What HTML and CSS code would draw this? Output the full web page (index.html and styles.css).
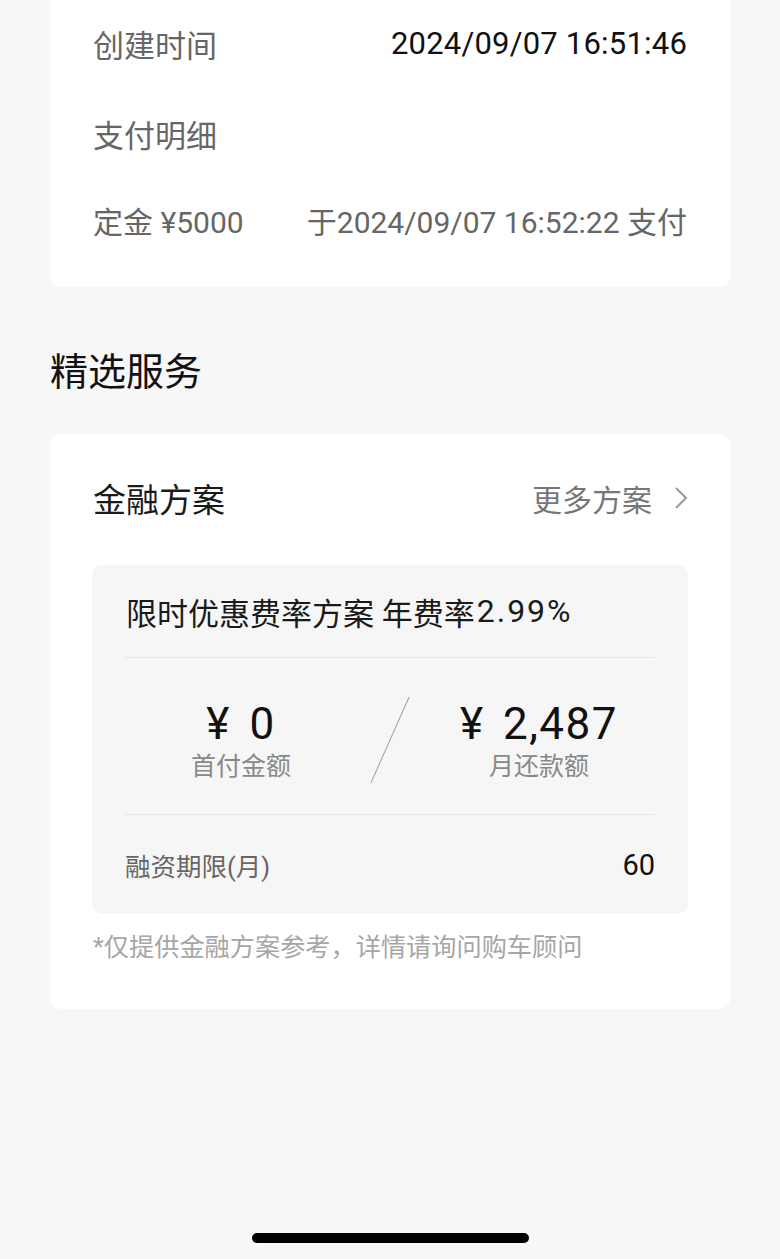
FILE: index.html
```html
<!DOCTYPE html>
<html lang="zh-CN">
<head>
    <meta charset="UTF-8">
    <meta name="viewport" content="width=device-width, initial-scale=1.0">
    <title>订单详情</title>
    <link rel="stylesheet" href="styles.css">
</head>
<body>
    <div class="page">
        <div class="card order">
            <div class="row row-first">
                <span class="label">创建时间</span>
                <span class="value">2024/09/07 16:51:46</span>
            </div>
            <div class="row row-second">
                <span class="label">支付明细</span>
            </div>
            <div class="row row-third">
                <span class="label">定金 ¥5000</span>
                <span class="label">于2024/09/07 16:52:22 支付</span>
            </div>
        </div>

        <h2 class="section-title">精选服务</h2>

        <div class="card finance">
            <div class="finance-head">
                <span class="finance-title">金融方案</span>
                <a class="more" href="#">
                    更多方案
                    <svg class="chevron" width="14" height="24" viewBox="0 0 14 24">
                        <polyline points="2,2 12,12 2,22" fill="none" stroke="#9a9a9a" stroke-width="2"/>
                    </svg>
                </a>
            </div>
            <div class="plan">
                <div class="plan-name">限时优惠费率方案 年费率<span class="rate">2.99%</span></div>
                <div class="stats">
                    <div class="stat">
                        <div class="amount">¥ 0</div>
                        <div class="stat-label">首付金额</div>
                    </div>
                    <div class="stat">
                        <div class="amount">¥ 2,487</div>
                        <div class="stat-label">月还款额</div>
                    </div>
                </div>
                <div class="term">
                    <span class="term-label">融资期限(月)</span>
                    <span class="term-value">60</span>
                </div>
            </div>
            <p class="note">*仅提供金融方案参考，详情请询问购车顾问</p>
        </div>

        <div class="home-bar"></div>
    </div>
</body>
</html>
```

FILE: styles.css
```css
body {
    margin: 0;
    background-color: #f7f7f7;
    font-family: Roboto, "Noto Sans CJK SC", sans-serif;
    color: #1a1a1a;
}
.page {
    display: flex;
    flex-direction: column;
    min-height: 100vh;
    box-sizing: border-box;
    padding: 0 50px 16px;
}
.card {
    background: #fff;
    border-radius: 10px;
}
.order {
    border-radius: 0 0 10px 10px;
    padding: 0 43px 27px;
}
.row {
    display: flex;
    justify-content: space-between;
    align-items: center;
    font-size: 31px;
}
.row-first {
    height: 86px;
}
.row-second {
    height: 94px;
}
.row-third {
    height: 80px;
}
.label {
    color: #666;
}
.row-third .label {
    font-size: 30px;
}
.value {
    color: #111;
    letter-spacing: 0.2px;
}
.section-title {
    margin: 60px 0 37px;
    font-size: 38px;
    font-weight: 400;
    line-height: 50px;
    color: #111;
}
.finance {
    padding: 0 42px 44px;
}
.finance-head {
    display: flex;
    justify-content: space-between;
    align-items: center;
    height: 128px;
    margin: 0 0 3px 1px;
}
.finance-title {
    font-size: 33px;
    color: #1a1a1a;
}
.more {
    display: flex;
    align-items: center;
    gap: 22px;
    font-size: 30px;
    color: #777;
    text-decoration: none;
}
.plan {
    background: #f6f6f6;
    border-radius: 10px;
}
.plan-name {
    margin: 0 33px;
    height: 92px;
    display: flex;
    align-items: center;
    padding-left: 1px;
    font-size: 31px;
    color: #1a1a1a;
    border-bottom: 1px solid #e6e6e6;
}
.rate {
    font-size: 32px;
    letter-spacing: 2px;
    margin-left: 2px;
}
.stats {
    position: relative;
    display: flex;
    padding: 41px 0 29px;
}
.stats::after {
    content: "";
    position: absolute;
    left: 50%;
    top: 35px;
    width: 1px;
    height: 94px;
    background: #a0a0a0;
    transform: translateX(-50%) rotate(24deg);
    transform-origin: center;
}
.stat {
    flex: 1;
    text-align: center;
}
.amount {
    font-size: 44px;
    line-height: 50px;
    letter-spacing: 1.5px;
    word-spacing: 6px;
    color: #111;
}
.stat-label {
    font-size: 25px;
    line-height: 36px;
    color: #888;
}
.term {
    margin: 0 33px;
    height: 99px;
    display: flex;
    justify-content: space-between;
    align-items: center;
    border-top: 1px solid #e6e6e6;
}
.term-label {
    font-size: 25.5px;
    color: #666;
}
.term-value {
    font-size: 29px;
    color: #111;
}
.note {
    margin: 17px 0 0 1px;
    font-size: 25.2px;
    line-height: 34px;
    color: #a6a6a6;
}
.home-bar {
    margin: auto auto 0;
    width: 277px;
    height: 10px;
    border-radius: 5px;
    background: #000;
}
```
